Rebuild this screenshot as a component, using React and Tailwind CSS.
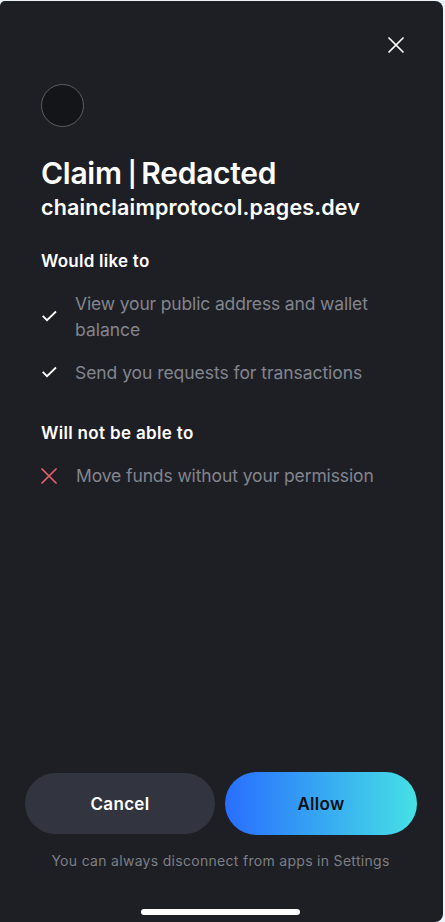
import React from "react";

function Cross({ className, size }) {
  return (
    <svg width={size} height={size} viewBox="0 0 16 16" fill="none" stroke="currentColor" strokeWidth="1.7" strokeLinecap="round" className={className}>
      <path d="M1 1 15 15M15 1 1 15" />
    </svg>
  );
}

function Check() {
  return (
    <svg width="17" height="12" viewBox="0 0 17 12" fill="none" stroke="currentColor" strokeWidth="1.8" className="relative -top-px shrink-0 text-white">
      <path d="M1.7 5.9 6 10.2 15 1.5" />
    </svg>
  );
}

export default function App() {
  return (
    <div className="h-[922px] w-[445px] overflow-hidden bg-[#eef3fa] pt-px font-['Inter',sans-serif]">
      <main className="flex h-[921px] w-[443px] flex-col rounded-tl-[5px] rounded-r-[8px] bg-[#1e1f25] text-white">
        <header className="flex h-[83px] shrink-0 justify-end pt-[36px] pr-[39px]">
          <button className="h-4 w-4" aria-label="Close"><Cross size={16} /></button>
        </header>
        <section className="flex flex-col pl-[41px] whitespace-nowrap">
          <div className="h-[43px] w-[43px] rounded-full border border-[#5b5d61] bg-[#141518]" />
          <h1 className="mt-[27px] flex h-[38px] text-[30px] leading-[38px] font-semibold tracking-[-0.28px]">
            <span>Claim</span>
            <span className="mr-[5px] ml-[6px] pt-px text-[25px] font-semibold">|</span>
            <span>Redacted</span>
          </h1>
          <p className="h-[30px] text-[21.5px] leading-[30px] font-semibold tracking-[0.16px]">chainclaimprotocol.pages.dev</p>
          <h2 className="mt-[27px] h-[24px] text-[17px] leading-[24px] font-semibold tracking-[0.25px]">Would like to</h2>
          <ul className="mt-[18px] flex flex-col gap-[17px] text-[17.5px] leading-[26px] text-[#82858d]">
            <li className="flex items-center gap-[17px]">
              <Check />
              <span><span className="tracking-[-0.15px]">View your public address and wallet</span><br />balance</span>
            </li>
            <li className="flex items-center gap-[17px]">
              <Check />
              <span className="tracking-[-0.05px]">Send you requests for transactions</span>
            </li>
          </ul>
          <h2 className="mt-[35px] h-[24px] text-[17px] leading-[24px] font-semibold tracking-[0.33px]">Will not be able to</h2>
          <div className="mt-[18px] flex items-center gap-[19px] text-[17.5px] leading-[26px] tracking-[-0.11px] text-[#82858d]">
            <Cross size={16} className="shrink-0 text-[#e0616b]" />
            <span>Move funds without your permission</span>
          </div>
        </section>
        <footer className="mt-auto flex flex-col items-center">
          <div className="flex w-full items-center gap-[10px] pl-[25px] text-[17px] font-semibold">
            <button className="h-[61px] w-[190px] rounded-full bg-[#32353f] pt-[2px] tracking-[0.3px]">Cancel</button>
            <button className="h-[63px] w-[192px] rounded-full bg-linear-to-r/srgb from-[#286eff] to-[#45e1e5] pt-[2px] tracking-[0.3px] text-[#0b0f16]">Allow</button>
          </div>
          <p className="mt-[16px] mr-[2px] h-[20px] text-[14px] leading-[20px] tracking-[0.3px] whitespace-nowrap text-[#7c7e83]">You can always disconnect from apps in Settings</p>
          <div className="mt-[38px] mr-[2px] mb-[7px] h-[6px] w-[159px] rounded-full bg-white" />
        </footer>
      </main>
    </div>
  );
}
